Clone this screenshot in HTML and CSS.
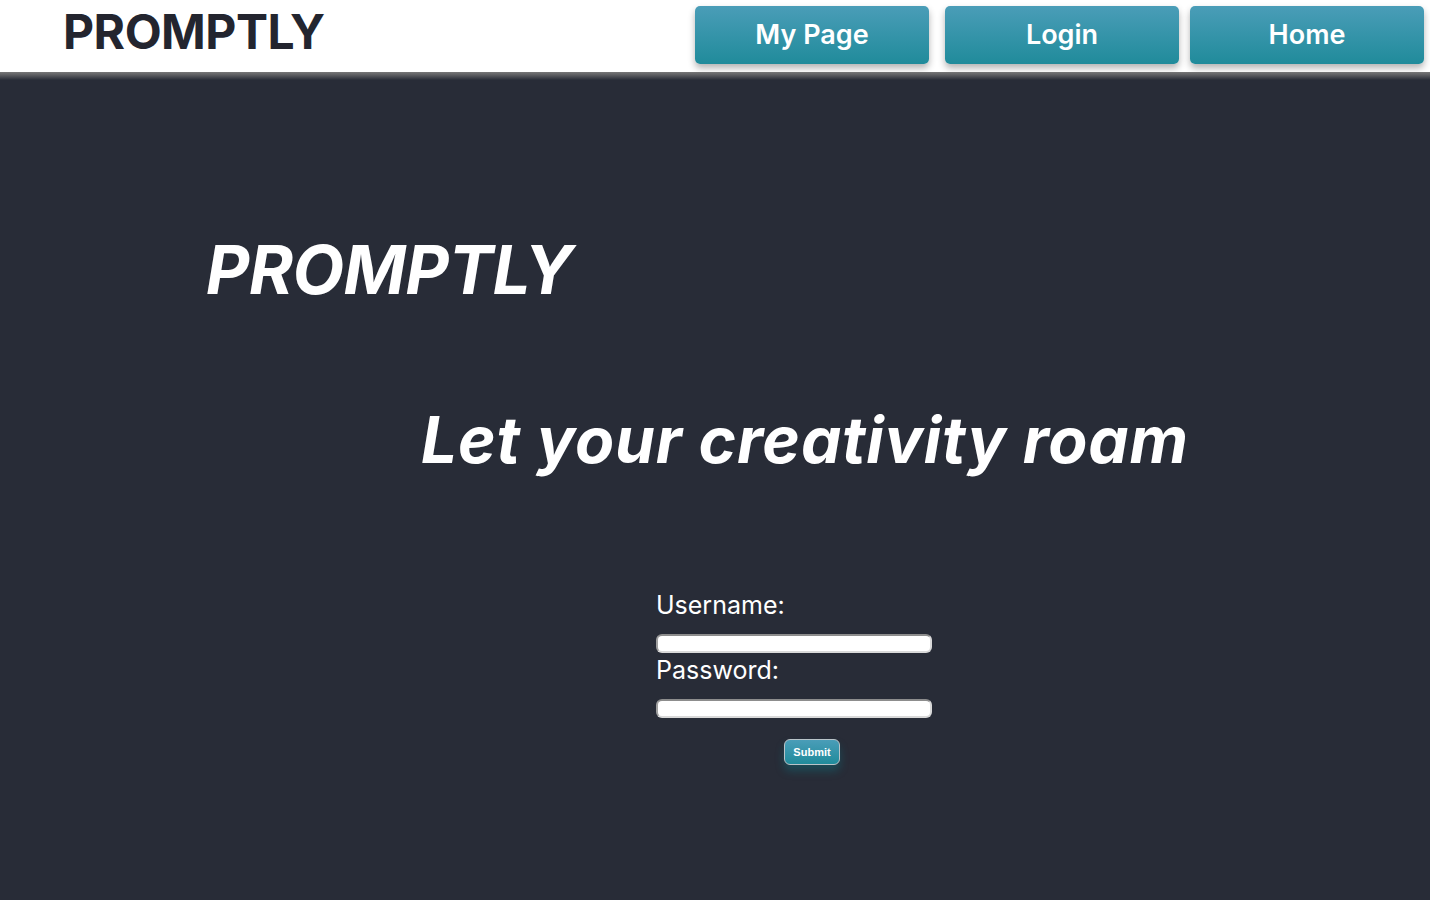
FILE: index.html
```html
<!DOCTYPE html>
<html>
<head>
<meta charset="utf-8">
<title>Promptly</title>
<link rel="stylesheet" href="styles.css">
</head>
<body>
<header class="topbar">
  <div class="brand">PROMPTLY</div>
  <nav class="nav">
    <a class="nav-btn nav-mypage" href="#">My Page</a>
    <a class="nav-btn nav-login" href="#">Login</a>
    <a class="nav-btn nav-home" href="#">Home</a>
  </nav>
</header>
<main class="main">
  <h1 class="hero-title">PROMPTLY</h1>
  <h2 class="hero-tagline">Let your creativity roam</h2>
  <form class="login-form">
    <label class="field-label" for="username">Username:</label>
    <input class="field-input" id="username" type="text">
    <label class="field-label" for="password">Password:</label>
    <input class="field-input" id="password" type="password">
    <button class="submit-btn" type="button">Submit</button>
  </form>
</main>
</body>
</html>
```
FILE: styles.css
```css
* { box-sizing: border-box; }
html, body {
  margin: 0;
  padding: 0;
  height: 100%;
}
body {
  background: #282c37;
  font-family: Inter, "Noto Sans", sans-serif;
  color: #ffffff;
  overflow: hidden;
}
.topbar {
  position: relative;
  z-index: 2;
  height: 72px;
  background: #ffffff;
  display: flex;
  align-items: flex-start;
  justify-content: space-between;
}
.topbar::after {
  content: "";
  position: absolute;
  left: 0;
  right: 0;
  top: 72px;
  height: 8px;
  background: linear-gradient(#777777, #5a5b5f 40%, #282c37);
}
.brand {
  padding-left: 63px;
  font-size: 48px;
  font-weight: 700;
  color: #23252f;
  line-height: 64px;
  letter-spacing: -0.5px;
}
.nav {
  display: flex;
  padding-top: 6px;
  padding-right: 6px;
}
.nav-btn {
  display: flex;
  align-items: center;
  justify-content: center;
  width: 234px;
  height: 58px;
  padding-bottom: 2px;
  border-radius: 5px;
  background: linear-gradient(#4a9db8, #208b9b);
  color: #ffffff;
  font-size: 27px;
  font-weight: 600;
  text-decoration: none;
  box-shadow: 0 4px 7px rgba(0, 0, 0, 0.3);
}
.nav-login { margin-left: 16px; }
.nav-home { margin-left: 11px; }
.main {
  padding-top: 157px;
}
.hero-title {
  margin: 0 0 0 206px;
  font-size: 67px;
  font-weight: 700;
  font-style: italic;
  line-height: 81px;
  letter-spacing: -0.5px;
}
.hero-tagline {
  margin: 91px 0 0 421px;
  font-size: 64px;
  font-weight: 700;
  font-style: italic;
  line-height: 78px;
  letter-spacing: 0.8px;
}
.login-form {
  margin: 109px 0 0 656px;
  width: 312px;
  display: flex;
  flex-direction: column;
  align-items: flex-start;
}
.field-label {
  display: block;
  padding-top: 3px;
  font-size: 25px;
  line-height: 29px;
  color: #ffffff;
}
.field-input {
  margin-top: 14px;
  width: 276px;
  height: 19px;
  border-radius: 6px;
  border: 2px solid #d9d9d9;
  border-top-color: #8d8d8d;
  border-left-color: #a0a0a0;
  background: #ffffff;
  padding: 0 4px;
}
.submit-btn {
  align-self: center;
  margin-top: 21px;
  width: 56px;
  height: 26px;
  border-radius: 6px;
  border: 1px solid #b9c3c8;
  background: linear-gradient(#4a9db8, #208b9b);
  color: #ffffff;
  font-family: "Liberation Sans", Arial, sans-serif;
  font-size: 11px;
  font-weight: 700;
  padding: 0;
  box-shadow: 0 6px 8px rgba(15, 110, 125, 0.45);
}
```
